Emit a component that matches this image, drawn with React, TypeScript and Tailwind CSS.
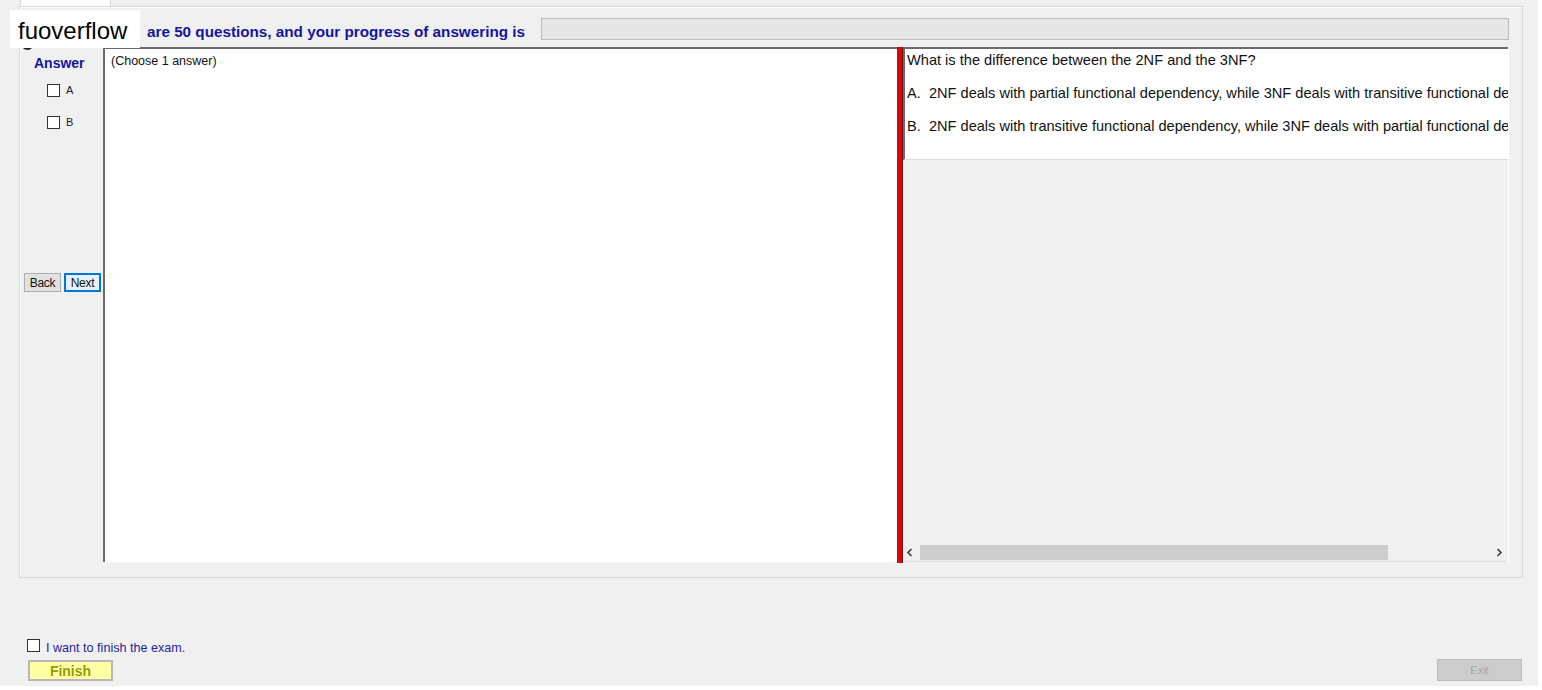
import React from 'react';

/**
 * ExamClient - desktop exam window (question panel + answer sheet)
 */

const Checkbox: React.FC<{ className?: string }> = ({ className = '' }) => (
  <span className={`block w-[13px] h-[13px] border border-[#333] bg-white shrink-0 ${className}`} />
);

const Chevron: React.FC<{ dir: 'left' | 'right' }> = ({ dir }) => (
  <svg width="8" height="9" viewBox="0 0 8 9" className="shrink-0">
    <path
      d={dir === 'left' ? 'M5.5 1L2 4.5L5.5 8' : 'M2.5 1L6 4.5L2.5 8'}
      fill="none"
      stroke="#3a3a3a"
      strokeWidth={1.6}
    />
  </svg>
);

export default function App() {
  return (
    <div className="relative w-[1542px] h-[690px] bg-white font-['Liberation_Sans',Arial,sans-serif]">
      <div className="w-[1538px] h-[686px] bg-[#f0f0f0] flex flex-col">
        {/* Tab header */}
        <div className="h-[6px] flex">
          <div className="ml-[20px] w-[91px] h-[6px] bg-white border-x border-[#d6d6d6]" />
        </div>

        {/* Group panel */}
        <div className="ml-[19px] w-[1504px] h-[572px] border border-[#d8d8d8] shadow-[inset_1px_1px_0_#ffffff] flex flex-col">
          {/* Header row */}
          <div className="mt-[11px] h-[22px] flex items-start">
            <div className="mt-[3px] w-[521px] flex text-[15.25px] font-bold text-[#15159e] whitespace-nowrap leading-[22px]">
              <span className="ml-[70px] w-[57px]">There</span>
              <span>are 50 questions, and your progress of answering is</span>
            </div>
            <div className="w-[968px] h-[22px] bg-[#e6e6e6] border border-[#bcbcbc]" />
          </div>

          {/* Content row */}
          <div className="mt-[7px] h-[516px] flex">
            {/* Answer sheet */}
            <div className="ml-[4px] w-[79px] flex flex-col">
              <div className="mt-[8px] h-[16px] pl-[10px] text-[14px] font-bold text-[#15159e] leading-[16px]">
                Answer
              </div>
              <div className="mt-[13px] h-[13px] pl-[23px] flex items-center gap-[6px] text-[11px] text-[#222]">
                <Checkbox />
                <span>A</span>
              </div>
              <div className="mt-[19px] h-[13px] pl-[23px] flex items-center gap-[6px] text-[11px] text-[#222]">
                <Checkbox />
                <span>B</span>
              </div>
              <div className="mt-[144px] flex gap-[3px]">
                <button className="w-[37px] h-[19px] bg-[#e1e1e1] border border-[#adadad] text-[12px] tracking-[-0.3px] text-[#111] leading-none">
                  Back
                </button>
                <button className="w-[37px] h-[19px] bg-[#e5f1fb] border-2 border-[#0078d7] text-[12px] tracking-[-0.3px] text-[#111] leading-none">
                  Next
                </button>
              </div>
            </div>

            {/* Answer text area */}
            <div className="w-[794px] h-[515px] bg-white border-l-2 border-t-2 border-[#6b6b6b] pl-[6px] pt-[5px] text-[12.5px] text-[#111] leading-[15px]">
              (Choose 1 answer)
            </div>

            {/* Splitter */}
            <div className="w-[6px] h-[516px] bg-[#d40a0a] border-r border-[#7a1010]" />

            {/* Question panel */}
            <div className="w-[606px] h-[516px] flex flex-col border-r border-white">
              <div className="h-[113px] bg-white border-t-2 border-l-2 border-[#6b6b6b] border-b border-b-[#dcdcdc] pl-[2px] pt-[3px] overflow-hidden whitespace-nowrap text-[14.6px] text-[#111] leading-[17px] flex flex-col gap-[16px]">
                <div>What is the difference between the 2NF and the 3NF?</div>
                <div>A.&nbsp;&nbsp;2NF deals with partial functional dependency, while 3NF deals with transitive functional dependency.</div>
                <div>B.&nbsp;&nbsp;2NF deals with transitive functional dependency, while 3NF deals with partial functional dependency.</div>
              </div>
              <div className="flex-1 bg-[#f0f0f0]" />
              <div className="h-[17px] flex items-center bg-[#f0f0f0] pl-[3px] pr-[5px]">
                <Chevron dir="left" />
                <div className="ml-[6px] w-[468px] h-[15px] bg-[#cdcdcd]" />
                <div className="flex-1" />
                <Chevron dir="right" />
              </div>
              <div className="h-[2px] border-t border-[#e2e2e2]" />
            </div>
          </div>
        </div>

        {/* Footer */}
        <div className="flex-1 flex items-end justify-between pl-[8px] pr-[16px] pb-[5px]">
          <div className="flex flex-col gap-[8px]">
            <div className="ml-[19px] h-[13px] flex items-center gap-[6px] text-[12.6px] text-[#24249c]">
              <Checkbox className="border-[#222]" />
              <span className="mt-[6px]">I want to finish the exam.</span>
            </div>
            <button className="ml-[20px] w-[85px] h-[21px] bg-[#ffffa6] border-2 border-[#b8b8b8] text-[14px] font-bold text-[#9a9a08] leading-none">
              Finish
            </button>
          </div>
          <button className="w-[85px] h-[22px] bg-[#cccccc] border border-[#bdbdbd] text-[11px] text-[#a9a9a9] leading-none">
            Exit
          </button>
        </div>
      </div>

      {/* Icon peeking from under the watermark */}
      <div className="absolute left-[21px] top-[37px] w-[13px] h-[13px] rounded-full border-2 border-[#222]" />

      {/* Watermark overlay */}
      <div className="absolute left-[10px] top-[10px] w-[130px] h-[38px] bg-white pl-[8px] text-[24px] text-black leading-[42px]">
        fuoverflow
      </div>
    </div>
  );
}
